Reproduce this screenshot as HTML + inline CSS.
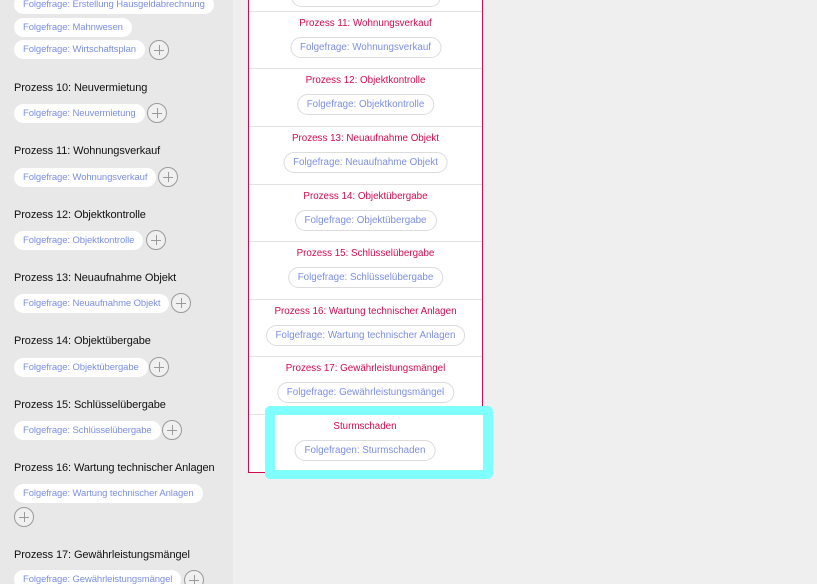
<!DOCTYPE html>
<html><head><meta charset="utf-8"><style>
*{box-sizing:border-box;margin:0;padding:0}
html{overflow:hidden;height:584px}
body{width:817px;height:584px;overflow:hidden;background:#efefef;font-family:"Liberation Sans",Arial,sans-serif;position:relative}
#left{position:absolute;left:0;top:0;width:233px;height:584px;background:#e8e8e8;overflow:hidden}
.h{position:absolute;left:14px;font-size:11px;color:#111;white-space:nowrap;letter-spacing:-0.1px}
.p{position:absolute;height:19px;line-height:19px;background:#fff;border-radius:10px;padding:0 9px;font-size:9.5px;color:#7b8fe6;white-space:nowrap;letter-spacing:-0.1px}
.pl{position:absolute;width:20px;height:20px;border:1px solid #9a9a9a;border-radius:50%;background:#f0f0f0}
.pl:before{content:"";position:absolute;left:4px;top:9px;width:10px;height:1px;background:#9a9a9a}
.pl:after{content:"";position:absolute;left:9px;top:4px;width:1px;height:10px;background:#9a9a9a}
#card{position:absolute;left:248px;top:-10px;width:235px;height:483px;background:#fff;border:1px solid #d6084f;border-top:none}
.row{position:absolute;left:0;width:233px;height:58px;border-top:1px solid #e2e2e2;text-align:center}
.t{position:absolute;left:0;right:0;top:6px;font-size:9.8px;color:#d6084f;white-space:nowrap}
.cp{position:absolute;top:25px;left:50%;transform:translateX(-50%);height:21px;line-height:19px;border:1px solid #dcdcdc;border-radius:11px;padding:0 9px;font-size:9.8px;color:#7b8fe6;white-space:nowrap;background:#fff}
#hl{position:absolute;left:265px;top:406px;width:228px;height:73px;border:9px solid #80ffff;border-left-width:10px;border-right-width:10px;border-radius:5px;background:#fff}
</style></head><body>
<div id="left">
<div class="p" style="left:14px;top:-5px">Folgefrage: Erstellung Hausgeldabrechnung</div>
<div class="p" style="left:14px;top:18px">Folgefrage: Mahnwesen</div>
<div class="p" style="left:14px;top:40px">Folgefrage: Wirtschaftsplan</div><div class="pl" style="left:149px;top:40px"></div>

<div class="h" style="top:82px">Prozess 10: Neuvermietung</div>
<div class="p" style="left:14px;top:104px">Folgefrage: Neuvermietung</div><div class="pl" style="left:147px;top:103px"></div>

<div class="h" style="top:145px">Prozess 11: Wohnungsverkauf</div>
<div class="p" style="left:14px;top:168px">Folgefrage: Wohnungsverkauf</div><div class="pl" style="left:158px;top:167px"></div>

<div class="h" style="top:209px">Prozess 12: Objektkontrolle</div>
<div class="p" style="left:14px;top:231px">Folgefrage: Objektkontrolle</div><div class="pl" style="left:146px;top:230px"></div>

<div class="h" style="top:272px">Prozess 13: Neuaufnahme Objekt</div>
<div class="p" style="left:14px;top:294px">Folgefrage: Neuaufnahme Objekt</div><div class="pl" style="left:171px;top:293px"></div>

<div class="h" style="top:335px">Prozess 14: Objektübergabe</div>
<div class="p" style="left:14px;top:358px">Folgefrage: Objektübergabe</div><div class="pl" style="left:149px;top:357px"></div>

<div class="h" style="top:399px">Prozess 15: Schlüsselübergabe</div>
<div class="p" style="left:14px;top:421px">Folgefrage: Schlüsselübergabe</div><div class="pl" style="left:162px;top:420px"></div>

<div class="h" style="top:462px">Prozess 16: Wartung technischer Anlagen</div>
<div class="p" style="left:14px;top:484px">Folgefrage: Wartung technischer Anlagen</div>
<div class="pl" style="left:14px;top:507px"></div>

<div class="h" style="top:549px">Prozess 17: Gewährleistungsmängel</div>
<div class="p" style="left:14px;top:570px">Folgefrage: Gewährleistungsmängel</div><div class="pl" style="left:184px;top:570px"></div>
</div>

<div id="card">
<div class="row" style="top:0;border-top:none"><div class="cp" style="top:-4px;width:150px"></div></div>
<div class="row" style="top:21px"><div class="t">Prozess 11: Wohnungsverkauf</div><div class="cp">Folgefrage: Wohnungsverkauf</div></div>
<div class="row" style="top:78px"><div class="t">Prozess 12: Objektkontrolle</div><div class="cp">Folgefrage: Objektkontrolle</div></div>
<div class="row" style="top:136px"><div class="t">Prozess 13: Neuaufnahme Objekt</div><div class="cp">Folgefrage: Neuaufnahme Objekt</div></div>
<div class="row" style="top:194px"><div class="t">Prozess 14: Objektübergabe</div><div class="cp">Folgefrage: Objektübergabe</div></div>
<div class="row" style="top:251px"><div class="t">Prozess 15: Schlüsselübergabe</div><div class="cp">Folgefrage: Schlüsselübergabe</div></div>
<div class="row" style="top:309px"><div class="t">Prozess 16: Wartung technischer Anlagen</div><div class="cp">Folgefrage: Wartung technischer Anlagen</div></div>
<div class="row" style="top:366px"><div class="t">Prozess 17: Gewährleistungsmängel</div><div class="cp">Folgefrage: Gewährleistungsmängel</div></div>
<div class="row" style="top:424px"></div>
</div>

<div id="hl">
<div class="t" style="top:6px;left:0;right:auto;width:180px;text-align:center">Sturmschaden</div>
<div class="cp" style="top:25px;left:90px">Folgefragen: Sturmschaden</div>
</div>
</body></html>
